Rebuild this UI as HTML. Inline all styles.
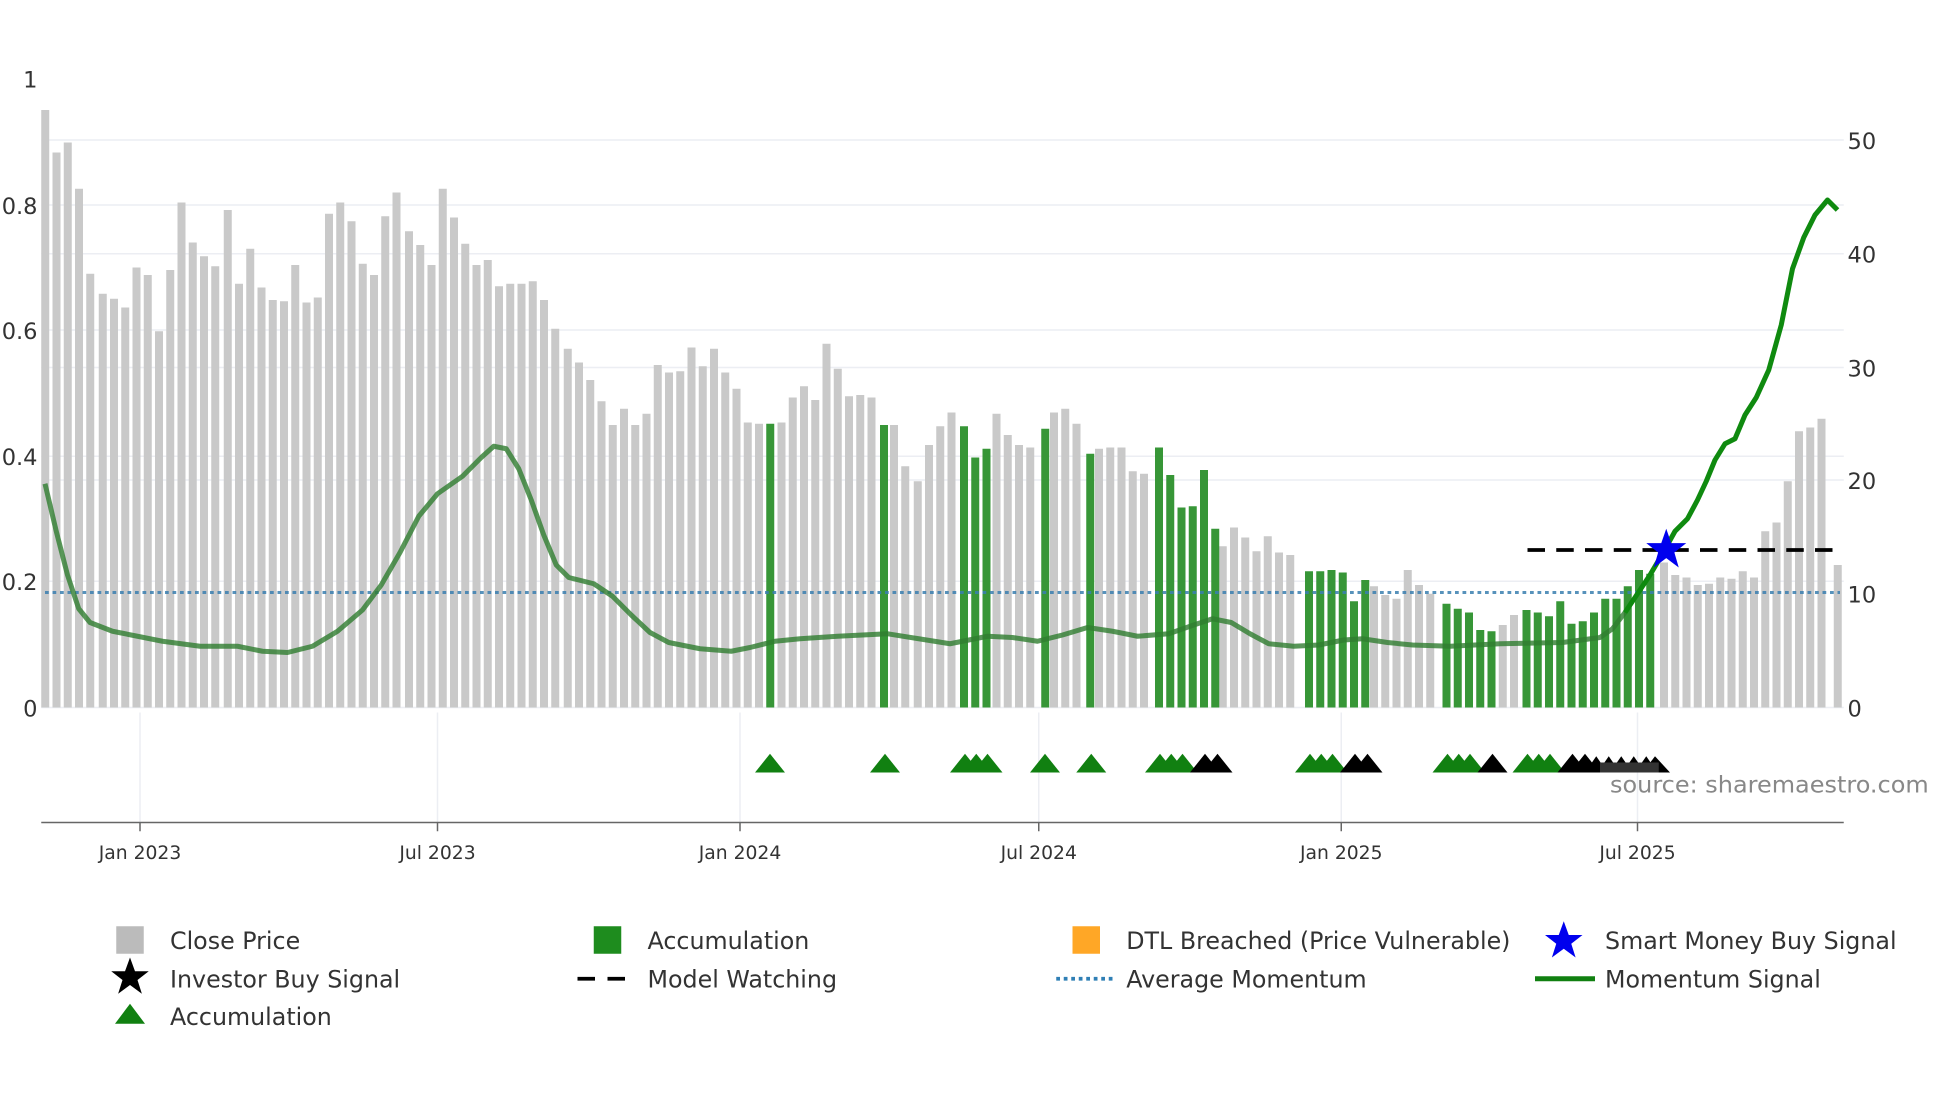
<!DOCTYPE html>
<html><head><meta charset="utf-8"><style>
html,body{margin:0;padding:0;background:#fff;}
svg{display:block;font-family:"DejaVu Sans","Liberation Sans",sans-serif;}
</style></head><body>
<svg width="1960" height="1102" viewBox="0 0 1568 881.6" xmlns="http://www.w3.org/2000/svg">
<rect width="1568" height="882" fill="#fff"/>
<g stroke="#eceef3" stroke-width="1.2">
<line x1="33" x2="1475" y1="112" y2="112"/><line x1="33" x2="1475" y1="164" y2="164"/>
<line x1="33" x2="1475" y1="203" y2="203"/><line x1="33" x2="1475" y1="264" y2="264"/>
<line x1="33" x2="1475" y1="294" y2="294"/><line x1="33" x2="1475" y1="365" y2="365"/>
<line x1="33" x2="1475" y1="384" y2="384"/><line x1="33" x2="1475" y1="465" y2="465"/>
<line x1="33" x2="1475" y1="566" y2="566"/>
<line x1="112" x2="112" y1="570" y2="658"/><line x1="350" x2="350" y1="570" y2="658"/>
<line x1="592" x2="592" y1="570" y2="658"/><line x1="831" x2="831" y1="570" y2="658"/>
<line x1="1073" x2="1073" y1="570" y2="658"/><line x1="1310" x2="1310" y1="570" y2="658"/>
</g>
<g fill="#c9c9c9">
<rect x="33" y="88" width="6.4" height="478"/><rect x="42" y="122" width="6.4" height="444"/><rect x="51" y="114" width="6.4" height="452"/><rect x="60" y="151" width="6.4" height="415"/>
<rect x="69" y="219" width="6.4" height="347"/><rect x="79" y="235" width="6.4" height="331"/><rect x="88" y="239" width="6.4" height="327"/><rect x="97" y="246" width="6.4" height="320"/>
<rect x="106" y="214" width="6.4" height="352"/><rect x="115" y="220" width="6.4" height="346"/><rect x="124" y="265" width="6.4" height="301"/><rect x="133" y="216" width="6.4" height="350"/>
<rect x="142" y="162" width="6.4" height="404"/><rect x="151" y="194" width="6.4" height="372"/><rect x="160" y="205" width="6.4" height="361"/><rect x="169" y="213" width="6.4" height="353"/>
<rect x="179" y="168" width="6.4" height="398"/><rect x="188" y="227" width="6.4" height="339"/><rect x="197" y="199" width="6.4" height="367"/><rect x="206" y="230" width="6.4" height="336"/>
<rect x="215" y="240" width="6.4" height="326"/><rect x="224" y="241" width="6.4" height="325"/><rect x="233" y="212" width="6.4" height="354"/><rect x="242" y="242" width="6.4" height="324"/>
<rect x="251" y="238" width="6.4" height="328"/><rect x="260" y="171" width="6.4" height="395"/><rect x="269" y="162" width="6.4" height="404"/><rect x="278" y="177" width="6.4" height="389"/>
<rect x="287" y="211" width="6.4" height="355"/><rect x="296" y="220" width="6.4" height="346"/><rect x="305" y="173" width="6.4" height="393"/><rect x="314" y="154" width="6.4" height="412"/>
<rect x="324" y="185" width="6.4" height="381"/><rect x="333" y="196" width="6.4" height="370"/><rect x="342" y="212" width="6.4" height="354"/><rect x="351" y="151" width="6.4" height="415"/>
<rect x="360" y="174" width="6.4" height="392"/><rect x="369" y="195" width="6.4" height="371"/><rect x="378" y="212" width="6.4" height="354"/><rect x="387" y="208" width="6.4" height="358"/>
<rect x="396" y="229" width="6.4" height="337"/><rect x="405" y="227" width="6.4" height="339"/><rect x="414" y="227" width="6.4" height="339"/><rect x="423" y="225" width="6.4" height="341"/>
<rect x="432" y="240" width="6.4" height="326"/><rect x="441" y="263" width="6.4" height="303"/><rect x="451" y="279" width="6.4" height="287"/><rect x="460" y="290" width="6.4" height="276"/>
<rect x="469" y="304" width="6.4" height="262"/><rect x="478" y="321" width="6.4" height="245"/><rect x="487" y="340" width="6.4" height="226"/><rect x="496" y="327" width="6.4" height="239"/>
<rect x="505" y="340" width="6.4" height="226"/><rect x="514" y="331" width="6.4" height="235"/><rect x="523" y="292" width="6.4" height="274"/><rect x="532" y="298" width="6.4" height="268"/>
<rect x="541" y="297" width="6.4" height="269"/><rect x="550" y="278" width="6.4" height="288"/><rect x="559" y="293" width="6.4" height="273"/><rect x="568" y="279" width="6.4" height="287"/>
<rect x="577" y="298" width="6.4" height="268"/><rect x="586" y="311" width="6.4" height="255"/><rect x="595" y="338" width="6.4" height="228"/><rect x="604" y="339" width="6.4" height="227"/>
<rect x="622" y="338" width="6.4" height="228"/><rect x="631" y="318" width="6.4" height="248"/><rect x="640" y="309" width="6.4" height="257"/><rect x="649" y="320" width="6.4" height="246"/>
<rect x="658" y="275" width="6.4" height="291"/><rect x="667" y="295" width="6.4" height="271"/><rect x="676" y="317" width="6.4" height="249"/><rect x="685" y="316" width="6.4" height="250"/>
<rect x="694" y="318" width="6.4" height="248"/><rect x="712" y="340" width="6.4" height="226"/><rect x="721" y="373" width="6.4" height="193"/><rect x="731" y="385" width="6.4" height="181"/>
<rect x="740" y="356" width="6.4" height="210"/><rect x="749" y="341" width="6.4" height="225"/><rect x="758" y="330" width="6.4" height="236"/><rect x="794" y="331" width="6.4" height="235"/>
<rect x="803" y="348" width="6.4" height="218"/><rect x="812" y="356" width="6.4" height="210"/><rect x="821" y="358" width="6.4" height="208"/><rect x="840" y="330" width="6.4" height="236"/>
<rect x="849" y="327" width="6.4" height="239"/><rect x="858" y="339" width="6.4" height="227"/><rect x="876" y="359" width="6.4" height="207"/><rect x="885" y="358" width="6.4" height="208"/>
<rect x="894" y="358" width="6.4" height="208"/><rect x="903" y="377" width="6.4" height="189"/><rect x="912" y="379" width="6.4" height="187"/><rect x="975" y="437" width="6.4" height="129"/>
<rect x="984" y="422" width="6.4" height="144"/><rect x="993" y="430" width="6.4" height="136"/><rect x="1002" y="441" width="6.4" height="125"/><rect x="1011" y="429" width="6.4" height="137"/>
<rect x="1020" y="442" width="6.4" height="124"/><rect x="1029" y="444" width="6.4" height="122"/><rect x="1096" y="469" width="6.4" height="97"/><rect x="1105" y="476" width="6.4" height="90"/>
<rect x="1114" y="479" width="6.4" height="87"/><rect x="1123" y="456" width="6.4" height="110"/><rect x="1132" y="468" width="6.4" height="98"/><rect x="1141" y="475" width="6.4" height="91"/>
<rect x="1199" y="500" width="6.4" height="66"/><rect x="1208" y="492" width="6.4" height="74"/>
<rect x="1328" y="450" width="6.4" height="116"/><rect x="1337" y="460" width="6.4" height="106"/><rect x="1346" y="462" width="6.4" height="104"/><rect x="1355" y="468" width="6.4" height="98"/>
<rect x="1364" y="467" width="6.4" height="99"/><rect x="1373" y="462" width="6.4" height="104"/><rect x="1382" y="463" width="6.4" height="103"/><rect x="1391" y="457" width="6.4" height="109"/>
<rect x="1400" y="462" width="6.4" height="104"/><rect x="1409" y="425" width="6.4" height="141"/><rect x="1418" y="418" width="6.4" height="148"/><rect x="1427" y="385" width="6.4" height="181"/>
<rect x="1436" y="345" width="6.4" height="221"/><rect x="1445" y="342" width="6.4" height="224"/><rect x="1454" y="335" width="6.4" height="231"/><rect x="1467" y="452" width="6.4" height="114"/>
</g>
<g fill="#379637">
<rect x="613" y="339" width="6.4" height="227"/><rect x="704" y="340" width="6.4" height="226"/>
<rect x="768" y="341" width="6.4" height="225"/><rect x="777" y="366" width="6.4" height="200"/><rect x="786" y="359" width="6.4" height="207"/>
<rect x="833" y="343" width="6.4" height="223"/><rect x="869" y="363" width="6.4" height="203"/>
<rect x="924" y="358" width="6.4" height="208"/><rect x="933" y="380" width="6.4" height="186"/><rect x="942" y="406" width="6.4" height="160"/><rect x="951" y="405" width="6.4" height="161"/><rect x="960" y="376" width="6.4" height="190"/><rect x="969" y="423" width="6.4" height="143"/>
<rect x="1044" y="457" width="6.4" height="109"/><rect x="1053" y="457" width="6.4" height="109"/><rect x="1062" y="456" width="6.4" height="110"/><rect x="1071" y="458" width="6.4" height="108"/><rect x="1080" y="481" width="6.4" height="85"/><rect x="1089" y="464" width="6.4" height="102"/>
<rect x="1154" y="483" width="6.4" height="83"/><rect x="1163" y="487" width="6.4" height="79"/><rect x="1172" y="490" width="6.4" height="76"/><rect x="1181" y="504" width="6.4" height="62"/><rect x="1190" y="505" width="6.4" height="61"/>
<rect x="1218" y="488" width="6.4" height="78"/><rect x="1227" y="490" width="6.4" height="76"/><rect x="1236" y="493" width="6.4" height="73"/><rect x="1245" y="481" width="6.4" height="85"/><rect x="1254" y="499" width="6.4" height="67"/><rect x="1263" y="497" width="6.4" height="69"/><rect x="1272" y="490" width="6.4" height="76"/><rect x="1281" y="479" width="6.4" height="87"/><rect x="1290" y="479" width="6.4" height="87"/><rect x="1299" y="469" width="6.4" height="97"/><rect x="1308" y="456" width="6.4" height="110"/><rect x="1317" y="459" width="6.4" height="107"/>
</g>
<line x1="36" x2="1472" y1="474" y2="474" stroke="#3a7fb0" stroke-width="2.4" stroke-dasharray="3,3" opacity="0.85"/>
<polyline fill="none" stroke="#2f7d2f" stroke-opacity="0.8" stroke-width="4" stroke-linejoin="round" points="36,387 45,425 54,460 63,487 72,498 90,505 110,509 130,513 160,517 190,517 210,521 230,522 250,517 270,505 290,488 305,468 320,442 335,413 350,395 370,381 385,366 395,357 405,359 415,375 425,400 435,428 445,452 455,462 475,467 490,477 505,492 520,506 535,514 560,519 585,521 600,518 620,513 640,511 670,509 710,507 735,511 760,515 790,509 810,510 830,513 850,508 870,502 890,505 910,509 935,507 955,500 970,495 985,498 1000,507 1015,515 1035,517 1055,516 1075,512 1090,511 1110,514 1130,516 1160,517 1200,515 1250,514 1280,510 1290,503 1300,490"/>
<polyline fill="none" stroke="#0f8a0f" stroke-width="4" stroke-linejoin="round" points="1300,490 1310,475 1320,460 1330,443 1340,425 1350,415 1358,400 1365,385 1372,368 1380,355 1388,351 1396,332 1405,318 1415,296 1425,260 1434,215 1443,190 1452,172 1462,160 1470,168"/>
<line x1="1222" x2="1468" y1="440" y2="440" stroke="#000" stroke-width="3" stroke-dasharray="14,9"/>
<polygon transform="translate(1333,440)" fill="#0000ee" points="0,-17 4,-5.5 16,-5.5 6.5,2 10,14 0,6.5 -10,14 -6.5,2 -16,-5.5 -4,-5.5"/>
<g fill="#118011">
<polygon points="604,618 616,603 628,618"/><polygon points="696,618 708,603 720,618"/>
<polygon points="760,618 772,603 784,618"/><polygon points="769,618 781,603 793,618"/><polygon points="778,618 790,603 802,618"/>
<polygon points="824,618 836,603 848,618"/><polygon points="861,618 873,603 885,618"/>
<polygon points="916,618 928,603 940,618"/><polygon points="925,618 937,603 949,618"/><polygon points="934,618 946,603 958,618"/>
<polygon points="1036,618 1048,603 1060,618"/><polygon points="1045,618 1057,603 1069,618"/><polygon points="1054,618 1066,603 1078,618"/>
<polygon points="1146,618 1158,603 1170,618"/><polygon points="1155,618 1167,603 1179,618"/><polygon points="1164,618 1176,603 1188,618"/>
<polygon points="1210,618 1222,603 1234,618"/><polygon points="1219,618 1231,603 1243,618"/><polygon points="1228,618 1240,603 1252,618"/>
</g>
<g fill="#000">
<polygon points="952,618 964,603 976,618"/><polygon points="962,618 974,603 986,618"/>
<polygon points="1072,618 1084,603 1096,618"/><polygon points="1082,618 1094,603 1106,618"/>
<polygon points="1182,618 1194,603 1206,618"/>
<polygon points="1246,618 1258,603 1270,618"/><polygon points="1256,618 1268,603 1280,618"/>
<polygon points="1268,618 1277,605 1286,618"/><polygon points="1278,618 1287,605 1296,618"/><polygon points="1288,618 1297,605 1306,618"/><polygon points="1298,618 1307,605 1316,618"/><polygon points="1308,618 1317,605 1326,618"/><polygon points="1314,618 1324,605 1336,618"/>
</g>
<rect x="1280" y="610" width="47" height="8" fill="#333"/>
<line x1="33" x2="1475" y1="658" y2="658" stroke="#666" stroke-width="1.2"/>
<g stroke="#666" stroke-width="1.2">
<line x1="112" x2="112" y1="658" y2="665"/><line x1="350" x2="350" y1="658" y2="665"/><line x1="592" x2="592" y1="658" y2="665"/><line x1="831" x2="831" y1="658" y2="665"/><line x1="1073" x2="1073" y1="658" y2="665"/><line x1="1310" x2="1310" y1="658" y2="665"/>
</g>
<g fill="#333" font-size="15" text-anchor="middle">
<text x="112" y="687">Jan 2023</text><text x="350" y="687">Jul 2023</text><text x="592" y="687">Jan 2024</text><text x="831" y="687">Jul 2024</text><text x="1073" y="687">Jan 2025</text><text x="1310" y="687">Jul 2025</text>
</g>
<g fill="#333" font-size="18" text-anchor="end">
<text x="30" y="70">1</text><text x="30" y="171">0.8</text><text x="30" y="271">0.6</text><text x="30" y="372">0.4</text><text x="30" y="472">0.2</text><text x="30" y="573">0</text>
</g>
<g fill="#333" font-size="18">
<text x="1478" y="119">50</text><text x="1478" y="210">40</text><text x="1478" y="301">30</text><text x="1478" y="391">20</text><text x="1478" y="482">10</text><text x="1478" y="573">0</text>
</g>
<text x="1288" y="634" fill="#888" font-size="18.6" textLength="255" lengthAdjust="spacingAndGlyphs">source: sharemaestro.com</text>
<g fill="#333" font-size="19">
<rect x="93" y="741" width="22" height="22" fill="#bbb"/><text x="136" y="759">Close Price</text>
<rect x="475" y="741" width="22" height="22" fill="#1e8c1e"/><text x="518" y="759">Accumulation</text>
<rect x="858" y="741" width="22" height="22" fill="#ffa726"/><text x="901" y="759">DTL Breached (Price Vulnerable)</text>
<polygon transform="translate(1251,753)" fill="#0000ee" points="0,-16 4,-5 15,-5 6,2 9.5,13 0,6 -9.5,13 -6,2 -15,-5 -4,-5"/><text x="1284" y="759">Smart Money Buy Signal</text>
<polygon transform="translate(104,782)" fill="#000" points="0,-16 4,-5 15,-5 6,2 9.5,13 0,6 -9.5,13 -6,2 -15,-5 -4,-5"/><text x="136" y="790">Investor Buy Signal</text>
<line x1="462" x2="506" y1="783" y2="783" stroke="#000" stroke-width="3" stroke-dasharray="14,10"/><text x="518" y="790">Model Watching</text>
<line x1="845" x2="890" y1="783" y2="783" stroke="#2f7fb5" stroke-width="3" stroke-dasharray="3,3"/><text x="901" y="790">Average Momentum</text>
<line x1="1228" x2="1276" y1="783" y2="783" stroke="#118011" stroke-width="4"/><text x="1284" y="790">Momentum Signal</text>
<polygon points="92,819 104,803 116,819" fill="#118011"/><text x="136" y="820">Accumulation</text>
</g>
</svg>
</body></html>
